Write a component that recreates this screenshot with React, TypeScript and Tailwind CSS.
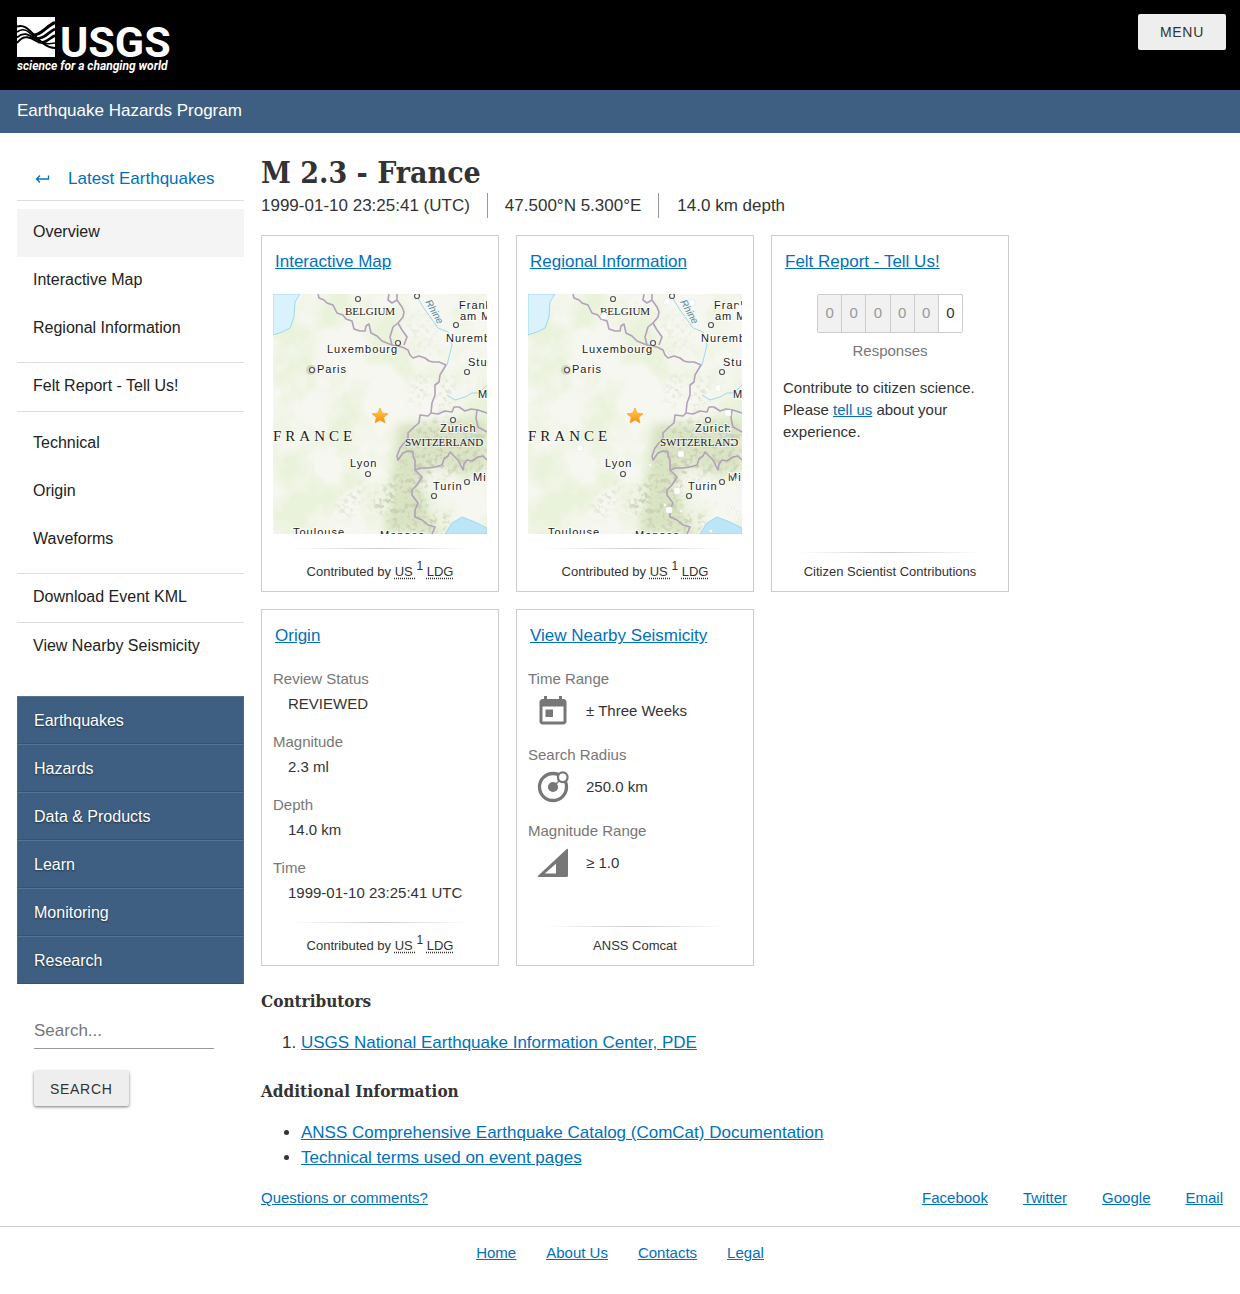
import { useId } from "react";
import type { ReactNode } from "react";

const eventNav = [
  ["Overview", "Interactive Map", "Regional Information"],
  ["Felt Report - Tell Us!"],
  ["Technical", "Origin", "Waveforms"],
  ["Download Event KML"],
  ["View Nearby Seismicity"],
];

// Single-link groups sit flush against their rules, the others get breathing room
const groupStyles = [
  "border-b pt-2 pb-[9px]",
  "border-b",
  "border-b pt-2 pb-[9px]",
  "border-b",
  "",
];

const siteNav = ["Earthquakes", "Hazards", "Data & Products", "Learn", "Monitoring", "Research"];

const originDetails = [
  ["Review Status", "REVIEWED"],
  ["Magnitude", "2.3 ml"],
  ["Depth", "14.0 km"],
  ["Time", "1999-01-10 23:25:41 UTC"],
];

const cities = [
  [85, 5], [125, 49], [39, 76], [183, 31], [194, 78],
  [180, 126], [95, 180], [161, 202], [194, 188], [144, 2],
];

const bigQuakes = [
  [139, 8], [164, 9], [76, 22], [211, 14], [190, 94],
  [200, 119], [52, 154], [153, 160], [149, 197], [141, 216],
];

const smallQuakes = [
  [108, 10], [136, 93], [170, 101], [142, 59], [122, 171], [202, 135], [153, 217],
  [165, 212], [178, 208], [188, 210], [200, 211], [205, 214], [210, 219], [175, 230],
  [183, 237], [200, 218], [137, 211], [203, 180], [209, 186], [187, 117], [204, 148],
];

function Logo() {
  return (
    <a href="#" aria-label="USGS science for a changing world">
      <svg className="block h-[62px] w-[170px]" viewBox="0 0 170 62">
        <path d="M0 0h38v40H0z" fill="#fff" />
        <g fill="none" stroke="#000">
          <path d="M0 9.500C8 7 12 13 18 19S30 31 38 31" strokeWidth="2" />
          <path d="M0 15C7 10 11 14 17 20S28 28 38 26" strokeWidth="1.600" />
          <path d="M0 20.500C7 14 12 18 18 22" strokeWidth="1.800" />
          <path d="M0 26C7 17 13 20 21 25" strokeWidth="2" />
          <path d="M15 18C24 19 29 9 38 5.500" strokeWidth="3" />
          <path d="M18 21C27 23 31 15 38 12" strokeWidth="2.800" />
          <path d="M21 25C29 27 32 21 38 18.500" strokeWidth="2.600" />
        </g>
        <text x="43" y="40" fill="#fff" fontSize="43" fontWeight="700" fontFamily="Roboto, sans-serif">USGS</text>
        <text x="0" y="53" fill="#fff" fontSize="12" fontWeight="700" fontStyle="italic" fontFamily="Roboto, sans-serif">science for a changing world</text>
      </svg>
    </a>
  );
}

function EventMap({ quakes = false }: { quakes?: boolean }) {
  const id = useId();

  return (
    <svg className="block h-60 w-full" viewBox="0 0 214 240" role="img" aria-label="Map of the area around the epicenter">
      <defs>
        <filter id={`${id}land`} x="0" y="0" width="100%" height="100%">
          <feTurbulence type="fractalNoise" baseFrequency="0.022" numOctaves="5" seed="8" />
          <feColorMatrix values="0 0 0 0 0.80  0 0 0 0 0.88  0 0 0 0 0.67  0 4 0 0 -1.75" />
        </filter>
        <filter id={`${id}relief`} x="0" y="0" width="100%" height="100%">
          <feTurbulence type="fractalNoise" baseFrequency="0.2" numOctaves="3" seed="3" />
          <feColorMatrix values="0 0 0 0 0.60  0 0 0 0 0.64  0 0 0 0 0.47  0 5 0 0 -2.45" />
        </filter>
        <filter id={`${id}soft`}>
          <feGaussianBlur stdDeviation="5" />
        </filter>
        <mask id={`${id}alps`}>
          <g fill="#fff" filter={`url(#${id}soft)`}>
            <path d="M138 136L165 126 214 136V184L192 176 158 184 150 206 158 222 180 220 168 240H118L112 220 96 212 124 180Z" />
            <path d="M140 88L154 78 152 104 140 112ZM168 90L182 80 178 114 164 118ZM66 206L92 186 84 214 66 226Z" opacity=".6" />
            <path d="M128 20L160 20 168 60 140 58Z" opacity=".2" />
          </g>
        </mask>
        <linearGradient id={`${id}star`} x1="0" y1="0" x2="0" y2="1">
          <stop stopColor="#ffd34d" />
          <stop offset="1" stopColor="#ff8a0c" />
        </linearGradient>
      </defs>

      <path d="M0 0h214v240H0z" fill="#f6f7f0" />
      <path d="M0 0h214v240H0z" filter={`url(#${id}land)`} opacity=".8" />
      <path d="M124 130L214 126V176L190 180 160 172 146 190 160 232 170 240H110L120 200Z" fill="#d2dfb8" opacity=".75" filter={`url(#${id}soft)`} />
      <path d="M164 192L214 184V216L186 212 166 214Z" fill="#f6f7f0" filter={`url(#${id}soft)`} />
      <g mask={`url(#${id}alps)`}>
        <path d="M0 0h214v240H0z" filter={`url(#${id}relief)`} />
      </g>

      {/* Seas and rivers */}
      <g stroke="#9fd8ef" strokeWidth="1">
        <path d="M0 0H27L22 8 21 23 17 34 9 38 0 41Z" fill="#d9f2fc" />
        <path d="M172 240L179 229 189 223 202 228 214 234V240Z" fill="#bce5f8" />
        <path d="M144 3L152 16 158 24 165 34 175 38 179 51 174 71M174 101L182 106 192 103 199 99 206 99 214 91M190 146L204 140" fill="none" />
      </g>

      {/* Country borders */}
      <g fill="none" stroke="#b3a0ba" strokeWidth="1.6" strokeLinejoin="round">
        <path d="M45 0L46 4 51 6 54 9 60 11 64 19 70 21 73 25 79 27 81 35 87 37 92 37 93 32 96 30 98 39 104 42 109 47 119 51 129 53 135 56 137 61 140 64 146 62 152 64 156 67 160 68 166 68 173 71 170 76 167 81 166 88 162 91 162 101 159 109 158 119 165 120 172 117 179 118 181 113 186 113 192 117 198 115 205 116 214 119" />
        <path d="M119 51L117 43 120 33 125 29 129 36 134 43 131 51M125 29L130 23 131 18 129 13 124 6 124 0M124 6L119 9 115 6 116 0" />
        <path d="M158 119L155 122 147 121 146 129 141 133 135 139 135 145 131 149 127 154 124 162 125 166 130 159 135 157 140 158 140 162 142 166 142 176 148 174 155 174 162 173 169 171 171 165 175 162 177 158 182 163 185 166 187 170 190 176 191 170 194 166 199 167 205 163 210 162 214 166" />
        <path d="M142 176L149 183 144 191 139 196 139 201 145 209 142 216 142 223 149 226 155 231 162 233 159 240M204 116L203 124 205 133 214 138" />
      </g>

      <circle cx="38" cy="76" r="5" fill="#cbbdae" opacity=".6" />
      <g fill="#fff" stroke="#555" strokeWidth="1.2">
        {cities.map(([x, y]) => (
          <circle key={`${x}-${y}`} cx={x} cy={y} r="2.5" />
        ))}
      </g>

      <g className="font-['Liberation_Sans',sans-serif] tracking-[1px]" fontSize="11" fill="#222" stroke="#fff" strokeWidth="2" strokeOpacity=".75" paintOrder="stroke">
        <text x="54" y="59">Luxembourg</text>
        <text x="44" y="79">Paris</text>
        <text x="186" y="15">Frankfurt</text>
        <text x="187" y="26">am Main</text>
        <text x="173" y="48">Nuremberg</text>
        <text x="195" y="72">Stuttgart</text>
        <text x="205" y="104">Munich</text>
        <text x="167" y="138">Zurich</text>
        <text x="77" y="173">Lyon</text>
        <text x="160" y="196">Turin</text>
        <text x="200" y="187">Milan</text>
        <text x="20" y="242">Toulouse</text>
        <text x="107" y="245">Monaco</text>
      </g>
      <g className="font-['Liberation_Serif',serif]" fill="#222" stroke="#fff" strokeWidth="2" strokeOpacity=".5" paintOrder="stroke">
        <text x="72" y="21" fontSize="11">BELGIUM</text>
        <text x="132" y="152" fontSize="11">SWITZERLAND</text>
        <text className="tracking-[4px]" x="0" y="147" fontSize="15">FRANCE</text>
      </g>
      <text className="font-['Liberation_Sans',sans-serif]" transform="translate(152 8) rotate(60)" fontSize="10" fontStyle="italic" fill="#4f86a3">Rhine</text>

      {quakes && (
        <g fill="#fff" stroke="#ddd" strokeWidth=".5">
          {bigQuakes.map(([x, y]) => (
            <rect key={`${x}-${y}`} x={x - 3} y={y - 3} width="6" height="6" rx="1" />
          ))}
          {smallQuakes.map(([x, y]) => (
            <circle key={`${x}-${y}`} cx={x} cy={y} r="1.5" />
          ))}
        </g>
      )}

      <path d="M107 114L109.300 119.200 115 119.800 110.700 123.500 112 129 107 126 102 129 103.300 123.500 99 119.800 104.700 119.200Z" fill={`url(#${id}star)`} stroke="#e99a2c" strokeWidth=".6" />
    </svg>
  );
}

function Card({ title, footer, children }: { title: string; footer: ReactNode; children: ReactNode }) {
  return (
    <section className="flex min-h-[357px] w-[238px] flex-col border border-[#ccc] px-[11px]">
      <h2 className="mb-2 flex h-[50px] items-center px-0.5 pt-0.5 text-[17px]">
        <a href="#" className="text-[#0071bc] underline">{title}</a>
      </h2>
      {children}
      <footer className="mt-auto text-center text-[13px]">
        <div className="mx-4 h-px bg-linear-to-r from-transparent via-[#ccc] to-transparent" />
        <p className="flex min-h-[38px] items-center justify-center">{footer}</p>
      </footer>
    </section>
  );
}

function Contributed() {
  return (
    <span className="h-[42px] pt-[3px] leading-10">
      Contributed by{" "}
      <abbr title="USGS National Earthquake Information Center" className="underline decoration-dotted underline-offset-2">US </abbr>
      <sup className="text-xs">1</sup>{" "}
      <abbr title="Laboratoire de Detection et de Geophysique" className="underline decoration-dotted underline-offset-2">LDG</abbr>
    </span>
  );
}

function SearchRow({ label, value, icon }: { label: string; value: string; icon: ReactNode }) {
  return (
    <div className="mb-3">
      <dt className="leading-6 text-[#777]">{label}</dt>
      <dd className="flex h-10 items-center gap-[15px] pl-[7px]">
        <svg className="size-9" viewBox="0 0 24 24" fill="#777">{icon}</svg>
        {value}
      </dd>
    </div>
  );
}

function Sidebar() {
  return (
    <aside className="w-[227px] shrink-0 pt-[22px]">
      <nav aria-label="Event">
        <a href="#" className="flex h-[46px] items-center border-b border-[#ddd] pt-0.5 pl-[18px] text-[17px] text-[#0071bc]">
          <svg className="mr-[18px] h-4 w-[15px]" viewBox="0 0 15 16" fill="none" stroke="currentColor" strokeWidth="1.3">
            <path d="M13.500 4.500v3.500H1.500M5 4.500L1.500 8 5 11.500" />
          </svg>
          Latest Earthquakes
        </a>
        {eventNav.map((group, i) => (
          <ul key={group[0]} className={`border-[#ddd] ${groupStyles[i]}`}>
            {group.map((label) => (
              <li key={label}>
                <a href="#" className={`flex h-12 items-center px-4 pb-0.5 ${label === "Overview" ? "bg-[#f4f4f4]" : ""}`}>
                  {label}
                </a>
              </li>
            ))}
          </ul>
        ))}
      </nav>

      <nav aria-label="Site" className="mt-[25px]">
        {siteNav.map((label) => (
          <a key={label} href="#" className="flex h-12 items-center border border-t-[#557395] border-r-[#4c6b8e] border-b-[#33527a] border-l-[#4c6b8e] bg-[#3e5f82] px-4 pt-px text-white text-shadow-[0_1px_2px_#0008]">
            {label}
          </a>
        ))}
      </nav>

      <form className="mt-[30px] flex flex-col items-start gap-[22px] pl-[17px]">
        <input type="search" aria-label="Search" placeholder="Search..." className="h-[35px] w-[180px] border-b border-[#999] text-[17px] outline-none placeholder:text-[#777]" />
        <button type="button" className="h-[35px] rounded-xs bg-[#eee] px-4 text-sm tracking-wider text-[#333] shadow-[0_1px_3px_#0008]">SEARCH</button>
      </form>
    </aside>
  );
}

export default function App() {
  return (
    <div className="bg-white font-['Liberation_Sans',Arial,sans-serif] text-base text-[#222]">
      <header>
        <div className="flex h-[90px] items-start justify-between bg-black pt-[14px] pr-[14px] pl-[17px]">
          <div className="pt-[3px]">
            <Logo />
          </div>
          <button type="button" className="h-9 rounded-xs bg-[#eee] px-[22px] text-sm tracking-wider text-[#333]">MENU</button>
        </div>
        <div className="flex h-[43px] items-center bg-[#3e5f82] px-[17px] pb-0.5 text-[17px] text-white">
          <a href="#">Earthquake Hazards Program</a>
        </div>
      </header>

      <div className="flex gap-[17px] px-[17px]">
        <Sidebar />

        <main className="min-w-0 flex-1 pt-5 text-[#333]">
          <h1 className="font-['DejaVu_Serif_Condensed','DejaVu_Serif',serif] text-[30px] leading-10 font-bold">M 2.3 - France</h1>
          <ul className="mb-[17px] flex h-[25px] items-center text-[17px] leading-[25px]">
            <li className="pr-[17px]">1999-01-10 23:25:41 (UTC)</li>
            <li className="border-l border-[#999] px-[17px]">47.500°N 5.300°E</li>
            <li className="border-l border-[#999] pl-[18px]">14.0 km depth</li>
          </ul>

          <div className="flex flex-wrap gap-[17px]">
            <Card title="Interactive Map" footer={<Contributed />}>
              <EventMap />
            </Card>
            <Card title="Regional Information" footer={<Contributed />}>
              <EventMap quakes />
            </Card>
            <Card title="Felt Report - Tell Us!" footer="Citizen Scientist Contributions">
              <div className="text-center text-[15px]">
                <ol className="mx-auto flex h-[39px] w-[146px] divide-x divide-[#ccc] rounded-xs border border-[#ccc]">
                  {[0, 0, 0, 0, 0, 0].map((count, i) => (
                    <li key={i} className={`flex flex-1 items-center justify-center ${i < 5 ? "bg-[#f1f1f1] text-[#999]" : ""}`}>
                      {count}
                    </li>
                  ))}
                </ol>
                <p className="mt-[7px] text-[#777]">Responses</p>
              </div>
              <p className="mt-[14px] text-[15px] leading-[22px]">
                Contribute to citizen science. Please <a href="#" className="text-[#0071bc] underline">tell us</a> about your experience.
              </p>
            </Card>
            <Card title="Origin" footer={<Contributed />}>
              <dl className="-mt-0.5 text-[15px] leading-[25px]">
                {originDetails.map(([term, value]) => (
                  <div key={term} className="mb-[13px] last:mb-0">
                    <dt className="text-[#777]">{term}</dt>
                    <dd className="pl-[15px]">{value}</dd>
                  </div>
                ))}
              </dl>
            </Card>
            <Card title="View Nearby Seismicity" footer="ANSS Comcat">
              <dl className="-mt-px text-[15px]">
                <SearchRow
                  label="Time Range"
                  value="± Three Weeks"
                  icon={<path d="M19 4h-1V2h-2v2H8V2H6v2H5c-1.100 0-2 .9-2 2v13c0 1.100.9 2 2 2h14c1.100 0 2-.9 2-2V6c0-1.100-.9-2-2-2zm0 15H5V9h14v10zM7 11h5v5H7z" />}
                />
                <SearchRow
                  label="Search Radius"
                  value="250.0 km"
                  icon={
                    <>
                      <circle cx="12" cy="12" r="9" fill="none" stroke="#777" strokeWidth="2.200" />
                      <path d="M12 12l5-5" stroke="#777" strokeWidth="1" />
                      <circle cx="12" cy="12" r="3.400" />
                      <circle cx="18.500" cy="5.500" r="3.200" fill="#fff" stroke="#777" strokeWidth="1.500" />
                    </>
                  }
                />
                <SearchRow
                  label="Magnitude Range"
                  value="≥ 1.0"
                  icon={<path fillRule="evenodd" d="M22 3V20.500Q22 21.300 21 21.300H2.500Q1.300 21.300 2.200 20.300L21 2.800Q22 2 22 3ZM14 12.500L6.500 19H14Z" />}
                />
              </dl>
            </Card>
          </div>

          <h2 className="mt-[21px] font-['DejaVu_Serif_Condensed','DejaVu_Serif',serif] text-[17px] leading-7 font-bold">Contributors</h2>
          <ol className="mt-[15px] list-decimal pl-10 text-[17px] leading-[25px]">
            <li>
              <a href="#" className="text-[#0071bc] underline">USGS National Earthquake Information Center, PDE</a>
            </li>
          </ol>

          <h2 className="mt-[22px] font-['DejaVu_Serif_Condensed','DejaVu_Serif',serif] text-[17px] leading-7 font-bold">Additional Information</h2>
          <ul className="mt-[15px] list-disc pl-10 text-[17px] leading-[25px]">
            <li>
              <a href="#" className="text-[#0071bc] underline">ANSS Comprehensive Earthquake Catalog (ComCat) Documentation</a>
            </li>
            <li>
              <a href="#" className="text-[#0071bc] underline">Technical terms used on event pages</a>
            </li>
          </ul>

          <div className="mt-[15px] flex h-[25px] items-center justify-between pt-0.5 text-[15px] text-[#0071bc] underline">
            <a href="#">Questions or comments?</a>
            <div className="flex gap-[35px]">
              <a href="#">Facebook</a>
              <a href="#">Twitter</a>
              <a href="#">Google</a>
              <a href="#">Email</a>
            </div>
          </div>
        </main>
      </div>

      <footer className="mt-4 flex h-[68px] justify-center gap-[30px] border-t border-[#ccc] pt-[15px] text-[15px] text-[#0071bc] underline">
        <a href="#">Home</a>
        <a href="#">About Us</a>
        <a href="#">Contacts</a>
        <a href="#">Legal</a>
      </footer>
    </div>
  );
}
